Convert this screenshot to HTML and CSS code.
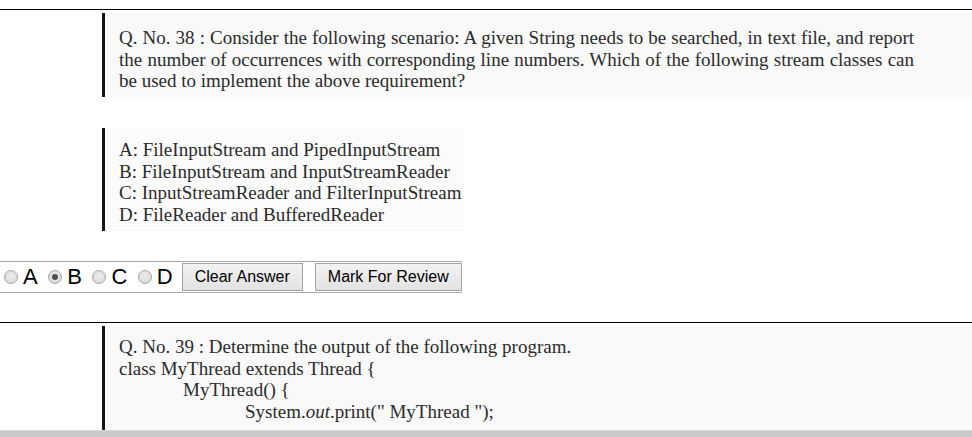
FILE: index.html
```html
<!DOCTYPE html>
<html>
<head>
<meta charset="utf-8">
<link rel="stylesheet" href="styles.css">
</head>
<body>
<div class="rule"></div>
<div class="qimg q38">
  <div class="jl">Q. No. 38 : Consider the following scenario: A given String needs to be searched, in text file, and report</div>
  <div class="jl">the number of occurrences with corresponding line numbers. Which of the following stream classes can</div>
  <div class="ln">be used to implement the above requirement?</div>
</div>
<div class="qimg opts">
  <div class="ln">A: FileInputStream and PipedInputStream</div>
  <div class="ln">B: FileInputStream and InputStreamReader</div>
  <div class="ln">C: InputStreamReader and FilterInputStream</div>
  <div class="ln">D: FileReader and BufferedReader</div>
</div>
<div class="answers">
  <div class="choices">
    <label class="choice"><input type="radio" name="q38" class="radio"><span>A</span></label>
    <label class="choice"><input type="radio" name="q38" class="radio" checked><span>B</span></label>
    <label class="choice"><input type="radio" name="q38" class="radio"><span>C</span></label>
    <label class="choice"><input type="radio" name="q38" class="radio"><span>D</span></label>
  </div>
  <button class="btn">Clear Answer</button>
  <button class="btn">Mark For Review</button>
</div>
<div class="rule rule2"></div>
<div class="qimg q39">
  <div class="ln">Q. No. 39 : Determine the output of the following program.</div>
  <div class="ln">class MyThread extends Thread {</div>
  <div class="ln ind1">MyThread() {</div>
  <div class="ln ind2">System.<i>out</i>.print(" MyThread ");</div>
</div>
<div class="hscroll"></div>
</body>
</html>
```
FILE: styles.css
```css
html, body {
  margin: 0;
  padding: 0;
  background: #ffffff;
  overflow: hidden;
  height: 437px;
}
.rule {
  margin-top: 9px;
  height: 1px;
  background: #000;
}
.rule2 {
  margin-top: 29px;
}
.qimg {
  margin-left: 102px;
  border-left: 3px solid #151515;
  box-sizing: border-box;
  padding-left: 14px;
  font-family: "Liberation Serif", "Times New Roman", serif;
  font-size: 19px;
  line-height: 21.5px;
  color: #2b2b2b;
  background: #f9f9f9;
}
.q38 {
  margin-top: 3px;
  height: 84px;
  padding-top: 14px;
}
.opts {
  margin-top: 31px;
  height: 103px;
  width: 362px;
  padding-top: 11px;
  background: #fbfbfb;
}
.q39 {
  margin-top: 3px;
  height: 120px;
  padding-top: 10px;
}
.jl {
  width: 795px;
  white-space: nowrap;
  text-align: justify;
  text-align-last: justify;
}
.ln {
  white-space: nowrap;
}
.ind1 { padding-left: 64px; }
.ind2 { padding-left: 126px; }
.answers {
  margin-top: 30px;
  width: 462px;
  height: 30px;
  border-top: 1px solid #a8a8a8;
  border-bottom: 1px solid #a8a8a8;
  display: flex;
  align-items: center;
  font-family: "Liberation Sans", Arial, sans-serif;
}
.choices {
  flex: none;
  display: flex;
  align-items: center;
  padding-left: 4px;
  gap: 10.5px;
  margin-right: 9px;
}
.choice {
  flex: none;
  display: flex;
  align-items: center;
  font-size: 22px;
  line-height: 1;
  color: #000;
  gap: 5px;
}
.radio {
  flex: none;
  -webkit-appearance: none;
  appearance: none;
  margin: 0;
  width: 14px;
  height: 14px;
  border-radius: 50%;
  border: 1px solid #a6a6a6;
  box-sizing: border-box;
  background: radial-gradient(circle at 50% 40%, #ececec 0%, #d6d6d6 100%);
  position: relative;
}
.radio:checked::after {
  content: "";
  position: absolute;
  left: 3px;
  top: 3px;
  width: 6px;
  height: 6px;
  border-radius: 50%;
  background: #505050;
}
.btn {
  flex: none;
  white-space: nowrap;
  height: 28px;
  margin: 0 12px 0 0;
  padding: 0 12px;
  font-family: "Liberation Sans", Arial, sans-serif;
  font-size: 16px;
  color: #000;
  border: 1px solid #a3a3a3;
  border-radius: 0;
  background: linear-gradient(#f3f3f3, #e2e2e2);
}
.hscroll {
  position: fixed;
  left: 0;
  right: 0;
  bottom: 0;
  height: 6px;
  background: #cacaca;
  border-top: 1px solid #d8d8d8;
}
```
